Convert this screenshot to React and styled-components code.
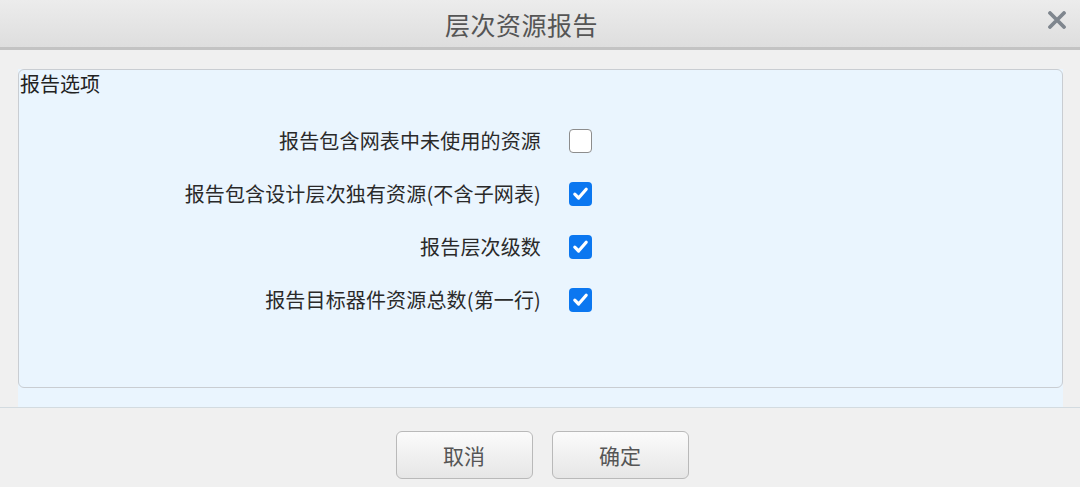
import React from "react";
import styled, { createGlobalStyle } from "styled-components";

const GlobalStyle = createGlobalStyle`
  html, body {
    margin: 0;
    padding: 0;
    background: #f0f0f0;
  }
  body {
    font-family: "Noto Sans CJK SC", "Noto Sans", sans-serif;
  }
`;

const options = [
  { label: "报告包含网表中未使用的资源", checked: false },
  { label: "报告包含设计层次独有资源(不含子网表)", checked: true },
  { label: "报告层次级数", checked: true },
  { label: "报告目标器件资源总数(第一行)", checked: true },
];

function CheckBox({ checked, onToggle }) {
  return (
    <Box checked={checked} onClick={onToggle}>
      {checked && (
        <svg width="23" height="23" viewBox="0 0 23 23">
          <path
            d="M5.8 12.2 L9.6 16 L17.2 7.2"
            fill="none"
            stroke="#fff"
            strokeWidth="3.2"
            strokeLinecap="round"
            strokeLinejoin="round"
          />
        </svg>
      )}
    </Box>
  );
}

export default function App() {
  const [values, setValues] = React.useState(options.map((o) => o.checked));

  function toggle(i) {
    setValues(values.map((v, j) => (j === i ? !v : v)));
  }

  return (
    <Dialog>
      <GlobalStyle />
      <Header>
        <Title>层次资源报告</Title>
        <Close>
          <svg width="20" height="18" viewBox="0 0 20 18">
            <path
              d="M3 2 L17 16 M17 2 L3 16"
              stroke="#7f868e"
              strokeWidth="3.8"
              strokeLinecap="round"
            />
          </svg>
        </Close>
      </Header>
      <Body>
        <Panel>
          <Legend>报告选项</Legend>
          <Rows>
            {options.map((o, i) => (
              <React.Fragment key={o.label}>
                <Label>{o.label}</Label>
                <CheckBox checked={values[i]} onToggle={() => toggle(i)} />
              </React.Fragment>
            ))}
          </Rows>
        </Panel>
      </Body>
      <Footer>
        <Button>取消</Button>
        <Button>确定</Button>
      </Footer>
    </Dialog>
  );
}

const Dialog = styled.div`
  width: 1080px;
  height: 487px;
  display: flex;
  flex-direction: column;
  background: #f0f0f0;
  overflow: hidden;
`;

const Header = styled.div`
  position: relative;
  height: 47px;
  flex-shrink: 0;
  display: flex;
  align-items: center;
  justify-content: center;
  background: linear-gradient(#ececec, #dedede);
  border-bottom: 3px solid #c3c3c3;
`;

const Title = styled.div`
  font-size: 25px;
  color: #555;
  letter-spacing: 0.5px;
  margin-right: 37px;
`;

const Close = styled.div`
  position: absolute;
  right: 13px;
  top: 10px;
  width: 20px;
  height: 18px;
  cursor: pointer;
`;

const Body = styled.div`
  height: 357px;
  flex-shrink: 0;
  box-sizing: border-box;
  padding: 19px 17px 0 18px;
`;

const Panel = styled.div`
  height: 100%;
  background: #eaf5fe;
  display: flex;
  flex-direction: column;
  padding-bottom: 19px;
  box-sizing: border-box;
  position: relative;

  &::before {
    content: "";
    position: absolute;
    left: 0;
    right: 0;
    top: 0;
    bottom: 19px;
    border: 1px solid #c9cdd2;
    border-radius: 6px;
    pointer-events: none;
  }
`;

const Legend = styled.div`
  font-size: 20px;
  line-height: 30px;
  color: #222;
  padding: 0 0 0 2px;
`;

const Rows = styled.div`
  display: grid;
  grid-template-columns: 521px 24px;
  column-gap: 28px;
  grid-auto-rows: 53px;
  align-items: center;
  margin-top: 15px;
  padding-left: 2px;
`;

const Label = styled.div`
  text-align: right;
  font-size: 20px;
  color: #2a2a2a;
  letter-spacing: 0.15px;
`;

const Box = styled.div`
  width: 23px;
  height: 24px;
  box-sizing: border-box;
  border-radius: 4px;
  display: flex;
  align-items: center;
  justify-content: center;
  cursor: pointer;
  background: ${(p) => (p.checked ? "#0b77f0" : "#fff")};
  border: ${(p) => (p.checked ? "none" : "1px solid #8d8d8d")};
`;

const Footer = styled.div`
  flex: 1;
  border-top: 1px solid #d3dbe0;
  display: flex;
  justify-content: center;
  align-items: flex-start;
  gap: 19px;
  padding-top: 23px;
  padding-left: 4px;
`;

const Button = styled.button`
  width: 137px;
  height: 48px;
  border: 1px solid #b9b9b9;
  border-radius: 6px;
  background: linear-gradient(#fbfbfb, #e6e6e6);
  font-family: "Noto Sans CJK SC", sans-serif;
  font-size: 21px;
  color: #555;
  cursor: pointer;
`;
